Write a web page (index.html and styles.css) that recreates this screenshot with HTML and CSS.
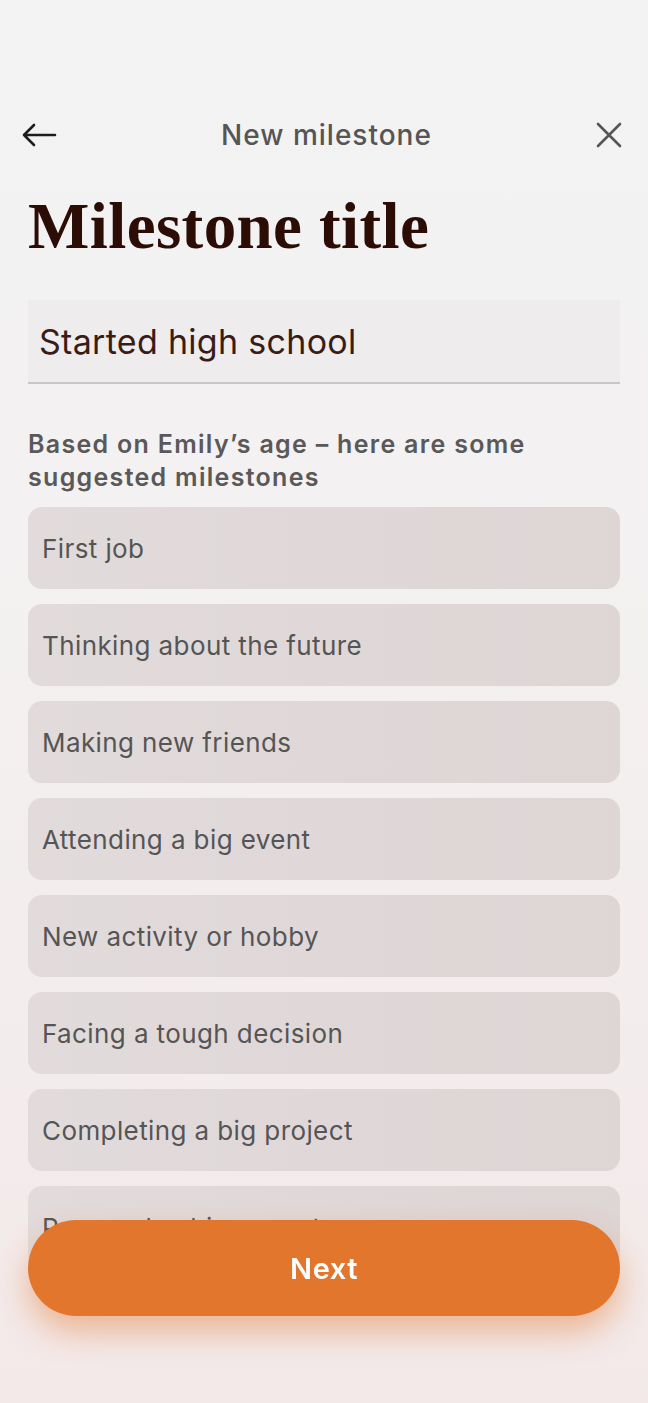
FILE: index.html
```html
<!DOCTYPE html>
<html lang="en">
<head>
  <meta charset="UTF-8" />
  <meta name="viewport" content="width=device-width, initial-scale=1.0"/>
  <title>New milestone</title>
  <link rel="stylesheet" href="styles.css">
</head>
<body>
  <div class="screen">
    <div class="topbar">
      <button class="icon-btn" aria-label="Back">
        <svg width="36" height="24" viewBox="0 0 36 24" fill="none" stroke="#1c1c1c" stroke-width="2.6" stroke-linecap="round" stroke-linejoin="round">
          <path d="M34 12H3M13 2L3 12l10 10"/>
        </svg>
      </button>
      <div class="topbar-title">New milestone</div>
      <button class="icon-btn" aria-label="Close">
        <svg width="26" height="26" viewBox="0 0 26 26" fill="none" stroke="#555" stroke-width="2.6" stroke-linecap="round">
          <path d="M2 2l22 22M24 2L2 24"/>
        </svg>
      </button>
    </div>

    <h1 class="page-title">Milestone title</h1>

    <div class="field">
      <input type="text" class="field-input" value="Started high school"/>
    </div>

    <p class="hint">Based on Emily’s age – here are some suggested milestones</p>

    <div class="suggestions">
      <div class="chip">First job</div>
      <div class="chip">Thinking about the future</div>
      <div class="chip">Making new friends</div>
      <div class="chip">Attending a big event</div>
      <div class="chip">New activity or hobby</div>
      <div class="chip">Facing a tough decision</div>
      <div class="chip">Completing a big project</div>
      <div class="chip">Personal achievement</div>
    </div>
  </div>

  <button class="next-btn">Next</button>
</body>
</html>
```

FILE: styles.css
```css
html, body { margin: 0; height: 100%; }
body {
  font-family: Inter, "Noto Sans", sans-serif;
  background: linear-gradient(#f3f3f3 0%, #f3f1f1 40%, #f3e9e9 100%);
  overflow: hidden;
}
.screen { padding: 104px 28px 0; }

.topbar { display: flex; align-items: center; justify-content: space-between; height: 62px; }
.icon-btn { background: none; border: none; padding: 0; display: flex; align-items: center; cursor: pointer; }
.icon-btn:first-child { margin-left: -7px; }
.icon-btn:last-child { margin-right: -2px; }
.topbar-title { font-size: 28px; font-weight: 500; color: #555; letter-spacing: 1px; }

.page-title {
  font-family: "Liberation Serif", "DejaVu Serif", serif;
  font-weight: 700;
  font-size: 65px;
  letter-spacing: 0.4px;
  color: #2b0d06;
  margin: 20px 0 0;
  line-height: 80px;
}

.field { margin-top: 34px; background: #eeecec; border-bottom: 2px solid #c9c6c6; height: 82px; display: flex; align-items: center; }
.field-input {
  border: none; background: transparent; outline: none; width: 100%;
  font-family: Inter, "Noto Sans", sans-serif; font-size: 34px; color: #3a1c16;
  padding: 0 11px; letter-spacing: 0.3px;
}

.hint { margin: 44px 0 13px; font-size: 25px; font-weight: 600; color: #5a5858; line-height: 33px; letter-spacing: 1.3px; }

.suggestions { display: flex; flex-direction: column; gap: 15px; }
.chip {
  background: linear-gradient(90deg, #e2dbdb, #ded5d5);
  border-radius: 14px; height: 82px; display: flex; align-items: center;
  padding: 0 14px; font-size: 26px; color: #555; letter-spacing: 0.4px;
}

.next-btn {
  position: fixed; left: 28px; right: 28px; bottom: 87px; height: 96px;
  border: none; border-radius: 48px; background: #e2762d; color: #fff;
  font-family: Inter, "Noto Sans", sans-serif; font-size: 29px; font-weight: 600; letter-spacing: 0.5px;
  box-shadow: 0 16px 32px rgba(226, 118, 45, 0.45);
}
```
